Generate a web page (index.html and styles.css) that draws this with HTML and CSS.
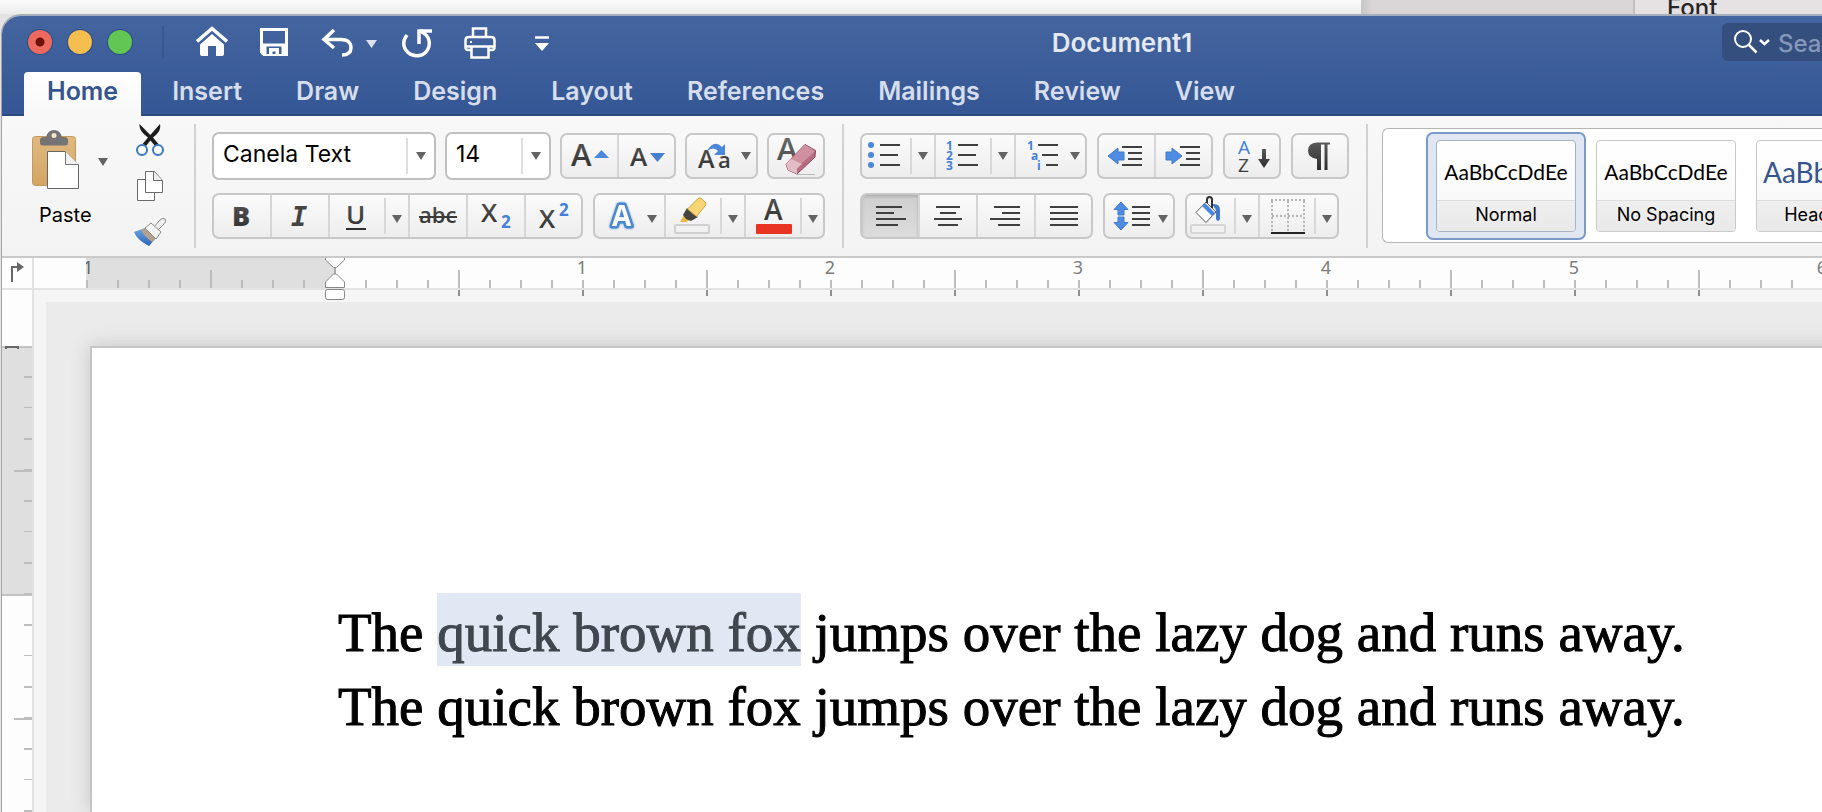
FILE: index.html
```html
<!DOCTYPE html>
<html lang="en">
<head>
<meta charset="utf-8">
<title>Document1</title>
<link rel="stylesheet" href="styles.css">
</head>
<body>
<svg class="defs" aria-hidden="true">
  <defs>
    <linearGradient id="ink" x1="0" y1="0" x2="0" y2="1"><stop offset="0" stop-color="#5a5a5a"/><stop offset="1" stop-color="#2c2c2c"/></linearGradient>
    <linearGradient id="board" x1="0" y1="0" x2="0" y2="1"><stop offset="0" stop-color="#e0b981"/><stop offset="1" stop-color="#d3a563"/></linearGradient>
    <linearGradient id="bristle" x1="0" y1="0" x2="0" y2="1"><stop offset="0" stop-color="#6ea6e6"/><stop offset="1" stop-color="#2a64b4"/></linearGradient>
    <symbol id="caret" viewBox="0 0 10 8"><path d="M0 0H10L5 8Z" fill="#636363"/></symbol>
  </defs>
</svg>

<div class="backdrop">
  <div class="backdrop-main"></div>
  <div class="backdrop-side"></div>
  <div class="backdrop-panel">Font</div>
</div>

<div class="window">
  <header class="chrome">
    <div class="titlebar">
      <div class="lights">
        <button class="light light-close" aria-label="Close"></button>
        <button class="light light-min" aria-label="Minimize"></button>
        <button class="light light-max" aria-label="Zoom"></button>
      </div>
      <div class="quick">
        <button aria-label="Home"><svg width="32" height="32" fill="#fff"><path d="M1 15.500 16 2.500 31 15.500" fill="none" stroke="#fff" stroke-width="3.500"/><path d="M16 8 28 18.500V28a2 2 0 0 1-2 2H20V20H12V30H6a2 2 0 0 1-2-2V18.500Z"/></svg></button>
        <button aria-label="Save"><svg width="40" height="32"><path d="M9.500 3.500H34.500V28.500H12L9.500 26Z" fill="none" stroke="#fff" stroke-width="3"/><path d="M9.500 17.500H34.500V28.500H9.500Z" fill="#fff"/><path d="M14.500 20.500H29.500V28H14.500Z" fill="#3f609b"/><path d="M17 22H27V30H23.500V25.500H20.500V30H17Z" fill="#fff"/></svg></button>
        <button aria-label="Undo"><svg width="62" height="32"><path d="M18 4 8 13.500 18 22M8 13.500H25C33 13.500 35 18 35 21.500C35 26 32 29 26 29" fill="none" stroke="#fff" stroke-width="3.500"/><path d="M50 14H61L55.500 22Z" fill="#dbe2ef"/></svg></button>
        <button aria-label="Redo"><svg width="32" height="32"><path d="M5 9C1 14 0 21 6 26.500C11 31 19 31 24 26C29 20 28 12 23 8L18 4.500" fill="none" stroke="#fff" stroke-width="3.500"/><path d="M17 18V5H30" fill="none" stroke="#fff" stroke-width="3.500"/></svg></button>
        <button aria-label="Print"><svg width="44" height="34" fill="none" stroke="#fff" stroke-width="2.500"><path d="M15 12V3.500H28V12"/><path d="M13 25H10Q7.500 25 7.500 22V15Q7.500 12 11 12H33Q36.500 12 36.500 15V22Q36.500 25 34 25H31"/><path d="M7.500 21.500H36.500M13.500 22V32.500H30.500V22"/><path d="M12 17h2" stroke-width="2"/></svg></button>
        <button aria-label="Customize toolbar"><svg width="32" height="32"><path d="M9 11.500H23" stroke="#fff" stroke-width="2.500"/><path d="M9 17H23L16 25Z" fill="#fff"/></svg></button>
      </div>
      <h1 class="doc-title">Document1</h1>
      <label class="search">
        <svg width="36" height="24" fill="none" stroke="#fff"><circle cx="9" cy="9" r="8" stroke-width="2"/><path d="M15 15 22.500 22.500" stroke-width="2.500"/><path d="M26 10 30.500 14 35 10" stroke-width="2.500"/></svg>
        <input type="text" placeholder="Search in Document" aria-label="Search in Document">
      </label>
    </div>
    <nav class="tabs">
      <a class="tab tab-active" href="#home">Home</a>
      <a class="tab" href="#insert">Insert</a>
      <a class="tab" href="#draw">Draw</a>
      <a class="tab" href="#design">Design</a>
      <a class="tab" href="#layout">Layout</a>
      <a class="tab" href="#references">References</a>
      <a class="tab" href="#mailings">Mailings</a>
      <a class="tab" href="#review">Review</a>
      <a class="tab" href="#view">View</a>
    </nav>
  </header>

  <div class="ribbon">
    <section class="section clipboard">
      <button class="paste">
        <svg width="76" height="60"><rect x=".5" y="6.500" width="43" height="49" rx="3" fill="url(#board)" stroke="#c39a5c"/><path d="M8 10Q8 7 12 7H14Q16 0 22 0T30 7H32Q36 7 36 10V13Q36 15.500 33 15.500H11Q8 15.500 8 13Z" fill="#747474"/><circle cx="22" cy="5.500" r="2.500" fill="#f3e6cf"/><path d="M15.500 21.500H33L46.500 35V58.500H15.500Z" fill="#fff" stroke="#666"/><path d="M33.500 21.500V34.500H46.500" fill="#f1f1f1" stroke="#777"/><path d="M66 28H76L71 36Z" fill="#636363"/></svg>
        <span>Paste</span>
      </button>
      <div class="clip-tools">
        <button aria-label="Cut"><svg width="32" height="32"><path d="M5.500 0C5 5 8 9 14 13.500L8.500 20 12 22 16.500 16.500 21 22 24.500 20 19 13.500C25 9 27 5 26 0L16.300 11Z" fill="#1d1d1d"/><circle cx="8" cy="26" r="5" fill="#fff" stroke="#3c78c8" stroke-width="2"/><circle cx="24" cy="26" r="5" fill="#fff" stroke="#3c78c8" stroke-width="2"/></svg></button>
        <button aria-label="Copy"><svg width="32" height="32" fill="#fff" stroke="#6a6a6a"><path d="M3.500 9.500H20.500V30.500H3.500Z"/><path d="M11.500 1.500H20.500L28.500 10.500V22.500H11.500Z"/><path d="M19.500 1.500V10.500H28.500" fill="#eee"/></svg></button>
        <button aria-label="Format painter"><svg width="32" height="32"><path d="M19 12 26 4Q29 1 31 3T30 8L23 15Z" fill="#eee" stroke="#8a8a8a"/><path d="M0 16 11 12 22 22 15 30Q3 24 0 16Z" fill="url(#bristle)"/><path d="M7 13.500 12 12 22 22 18.500 26Q10 21 7 13.500Z" fill="#b3a08f"/><path d="M11 12 17 7 27 16 22 23Z" fill="#f4f4f4" stroke="#8a8a8a"/></svg></button>
      </div>
    </section>

    <section class="section section-font">
      <div class="row row-font">
        <span class="combo combo-name"><select aria-label="Font"><option>Canela Text</option></select><svg class="combo-arrow" width="10" height="8"><use href="#caret"/></svg></span>
        <span class="combo combo-size"><select aria-label="Font size"><option>14</option></select><svg class="combo-arrow" width="10" height="8"><use href="#caret"/></svg></span>
        <div class="group">
          <button aria-label="Increase font size"><svg width="55" height="42"><text class="glyph" x="9" y="31" font-size="31">A</text><path d="M32 23H47L39.500 15Z" fill="#4b87dc"/></svg></button>
          <button aria-label="Decrease font size"><svg width="55" height="42"><text class="glyph" x="11" y="31" font-size="26">A</text><path d="M31 18H46L38.500 27Z" fill="#4580cf"/></svg></button>
        </div>
        <div class="group">
          <button aria-label="Change case"><svg width="69" height="42"><text class="glyph" x="11" y="33" font-size="25">A</text><text class="glyph" x="31" y="33" font-size="22">a</text><path d="M20 16Q27 4 35 12L38 9V20H27L31 16Q27 11 20 16Z" fill="#4b87dc"/><use href="#caret" x="54" y="17" width="10" height="8"/></svg></button>
        </div>
        <div class="group">
          <button aria-label="Clear formatting"><svg width="54" height="42"><text class="glyph" x="8" y="25" font-size="31" fill-opacity=".85">A</text><path d="M28 39.500H46" stroke="#bbb"/><path d="M17 29 36 9.500 46.500 15.500 46 22 28 39 19 35Z" fill="#b86d80" stroke="#8f4256"/><path d="M17 29 36 9.500 46 16 28 33Z" fill="#cf91a0"/><path d="M17 29 22 24 33 29 28 33.500V39L19 35Z" fill="#e2bdc6"/></svg></button>
        </div>
      </div>
      <div class="row">
        <div class="group">
          <button aria-label="Bold"><svg width="56" height="42"><text class="glyph glyph-bold" x="18" y="31" font-size="27">B</text></svg></button>
          <button aria-label="Italic"><svg width="56" height="42"><text class="glyph-italic" x="19" y="31" font-size="27">I</text></svg></button>
          <button aria-label="Underline"><svg width="54" height="42"><text class="glyph" x="16" y="29" font-size="26">U</text><path d="M16 34H36" stroke="#2f2f2f" stroke-width="2"/></svg></button>
          <button class="split" aria-label="Underline options"><svg width="22" height="42"><use href="#caret" x="6" y="20" width="10" height="8"/></svg></button>
          <button aria-label="Strikethrough"><svg width="56" height="42"><text class="glyph" x="9" y="28" font-size="22">abc</text><path d="M9 22H47" stroke="#3a3a3a" stroke-width="2"/></svg></button>
          <button aria-label="Subscript"><svg width="56" height="42"><text class="glyph" x="13" y="27" font-size="26">X</text><text class="glyph-blue" x="33" y="33" font-size="17">2</text></svg></button>
          <button aria-label="Superscript"><svg width="55" height="42"><text class="glyph" x="13" y="33" font-size="26">X</text><text class="glyph-blue" x="33" y="21" font-size="17">2</text></svg></button>
        </div>
        <div class="group">
          <button aria-label="Text effects"><svg width="69" height="42"><text class="glyph-glow" x="17" y="31" font-size="28">A</text><use href="#caret" x="52" y="20" width="10" height="8"/></svg></button>
          <button aria-label="Highlight color"><svg width="54" height="42"><path d="M14 27 18 20 24 25 20 27Z" fill="#e9b93f"/><path d="M17 20 21 13 32 22 25 26 20 24Z" fill="#444"/><path d="M21.500 14 32 3.500Q34 2 36 4L39 7Q41 9 39 11L30.500 21.500Z" fill="#f8d673" stroke="#cfa545"/><rect x="9" y="30" width="34" height="8" rx="1" fill="#f1f1f1" stroke="#d0d0d0" stroke-width="2"/></svg></button>
          <button class="split" aria-label="Highlight options"><svg width="22" height="42"><use href="#caret" x="6" y="20" width="10" height="8"/></svg></button>
          <button aria-label="Font color"><svg width="54" height="42"><text class="glyph" x="18" y="25" font-size="28">A</text><rect x="10" y="29" width="36" height="10" rx="1" fill="#e93323"/></svg></button>
          <button class="split" aria-label="Font color options"><svg width="21" height="42"><use href="#caret" x="6" y="20" width="10" height="8"/></svg></button>
        </div>
      </div>
    </section>

    <section class="section section-paragraph">
      <div class="row row-top">
        <div class="group">
          <button aria-label="Bullets"><svg width="48" height="42"><g fill="#4b87dc"><circle cx="9" cy="10" r="3"/><circle cx="9" cy="20" r="3"/><circle cx="9" cy="30" r="3"/></g><path class="lines" d="M18 10H38M18 20H36M18 30H38"/></svg></button>
          <button class="split" aria-label="Bullet options"><svg width="22" height="42"><use href="#caret" x="6" y="17" width="10" height="8"/></svg></button>
          <button aria-label="Numbering"><svg width="54" height="42"><g class="glyph-blue" font-size="12"><text x="10" y="15">1</text><text x="10" y="25">2</text><text x="10" y="35">3</text></g><path class="lines" d="M22 10H42M22 20H40M22 30H42"/></svg></button>
          <button class="split" aria-label="Numbering options"><svg width="22" height="42"><use href="#caret" x="6" y="17" width="10" height="8"/></svg></button>
          <button aria-label="Multilevel list"><svg width="69" height="42"><g class="glyph-blue" font-size="12"><text x="11" y="15">1</text><text x="15" y="25">a</text><text x="21" y="35">i</text></g><path class="lines" d="M22 10H42M26 20H42M30 30H42"/><use href="#caret" x="54" y="17" width="10" height="8"/></svg></button>
        </div>
        <div class="group">
          <button aria-label="Decrease indent"><svg width="55" height="42"><path d="M9 21 19 13V17H25V25H19V29Z" class="arrow"/><path class="lines" d="M23 12H43M29 18H43M29 24H43M23 30H43"/></svg></button>
          <button aria-label="Increase indent"><svg width="55" height="42"><path d="M26 21 16 13V17H10V25H16V29Z" class="arrow"/><path class="lines" d="M24 12H44M30 18H44M30 24H44M24 30H44"/></svg></button>
        </div>
        <div class="group">
          <button aria-label="Sort"><svg width="54" height="42"><text class="glyph-blue glyph-regular" x="13" y="19" font-size="19">A</text><text class="glyph glyph-regular" x="13" y="37" font-size="19">Z</text><path d="M37 14H41V24H45L39 33 33 24H37Z" fill="url(#ink)"/></svg></button>
        </div>
        <div class="group">
          <button aria-label="Show formatting marks"><svg width="54" height="42"><path d="M24 24Q15 23 15 15.500T24 7.500H37V9.500H34.500V35H31.500V9.500H28V35H24Z" fill="url(#ink)"/></svg></button>
        </div>
      </div>
      <div class="row">
        <div class="group">
          <button class="pressed" aria-label="Align left" aria-pressed="true"><svg width="56" height="42"><path class="lines" d="M14 12H40M14 18H32M14 24H44M14 30H36"/></svg></button>
          <button aria-label="Center"><svg width="56" height="42"><path class="lines" d="M16 12H40M20 18H36M14 24H42M18 30H38"/></svg></button>
          <button aria-label="Align right"><svg width="56" height="42"><path class="lines" d="M16 12H42M24 18H42M12 24H42M20 30H42"/></svg></button>
          <button aria-label="Justify"><svg width="55" height="42"><path class="lines" d="M14 12H42M14 18H42M14 24H42M14 30H42"/></svg></button>
        </div>
        <div class="group">
          <button aria-label="Line spacing"><svg width="68" height="42"><path d="M16 7 23 14.500H19V20H13V14.500H9ZM16 35 23 27.500H19V22H13V27.500H9Z" class="arrow"/><path class="lines" d="M27 12H45M27 18H45M27 24H45M27 30H45"/><use href="#caret" x="53" y="20" width="10" height="8"/></svg></button>
        </div>
        <div class="group">
          <button aria-label="Shading"><svg width="47" height="42"><path d="M25 9Q33 8 33 15V24Q31 28 29 24V15Z" fill="#3f79cc"/><path d="M19 7 29 17 19 27.500 9 17.500Z" fill="#fff" stroke="#555"/><path d="M15 11 18 8 28 18 25 21Z" fill="#4b87dc"/><path d="M20 8V5Q20 2 22.500 2T25 5V13" fill="none" stroke="#333" stroke-width="2"/><rect x="4" y="30" width="34" height="8" rx="1" fill="#f1f1f1" stroke="#d6d6d6" stroke-width="2"/></svg></button>
          <button class="split" aria-label="Shading options"><svg width="22" height="42"><use href="#caret" x="6" y="20" width="10" height="8"/></svg></button>
          <button aria-label="Borders"><svg width="54" height="42"><path d="M11 5H45M12 6V36M28 6V36M44 6V36M12 21H44" fill="none" stroke="#b4b4b4" stroke-width="2" stroke-dasharray="2 2"/><path d="M11 38H45" stroke="#222" stroke-width="2"/></svg></button>
          <button class="split" aria-label="Border options"><svg width="21" height="42"><use href="#caret" x="6" y="20" width="10" height="8"/></svg></button>
        </div>
      </div>
    </section>

    <section class="styles">
      <button class="style style-selected"><span class="card"><span class="preview">AaBbCcDdEe</span><span class="name">Normal</span></span></button>
      <button class="style"><span class="card"><span class="preview">AaBbCcDdEe</span><span class="name">No Spacing</span></span></button>
      <button class="style"><span class="card"><span class="preview preview-heading">AaBbCcDc</span><span class="name">Heading 1</span></span></button>
    </section>
  </div>

  <div class="editor">
    <button class="tab-kind" aria-label="Tab stop type"><svg width="30" height="30"><path d="M10 24V9H16" fill="none" stroke="#666" stroke-width="2"/><path d="M15 4 22 9 15 14Z" fill="#666"/></svg></button>
    <div class="hruler">
      <div class="hruler-margin">1</div>
      <ol class="hruler-scale"><li>1</li><li>2</li><li>3</li><li>4</li><li>5</li><li>6</li></ol>
      <svg class="indent" width="20" height="43" fill="#fff" stroke="#888"><path d="M10 10V16" stroke="#aaa" stroke-width="2"/><path d="M.5 0V2L8.500 9.500H11.500L19.500 2V0"/><path d="M.5 29.500V24L8.500 16H11.500L19.500 24V29.500Z"/><rect x=".5" y="31.500" width="19" height="10" rx="2"/></svg>
    </div>
    <div class="vruler"><svg class="vmark" width="14" height="4"><path d="M1 3V1H13V3" fill="none" stroke="#666" stroke-width="2"/></svg></div>
    <div class="canvas-frame">
      <main class="canvas">
        <article class="page">
          <p>The <mark>quick brown fox</mark> jumps over the lazy dog and runs away.</p>
          <p>The quick brown fox jumps over the lazy dog and runs away.</p>
        </article>
      </main>
    </div>
  </div>
</div>
</body>
</html>
```
FILE: styles.css
```css
* { box-sizing: border-box; }
body {
  margin: 0;
  height: 100vh;
  overflow: hidden;
  display: grid;
  grid-template: 14px 1fr / 100%;
  background: #e3e3e3;
  font-family: Inter, "Liberation Sans", sans-serif;
}
button { margin: 0; padding: 0; border: 0; background: none; font: inherit; color: inherit; display: block; flex: none; }
svg { display: block; }
.defs { position: absolute; width: 0; height: 0; }

.backdrop { display: flex; background: #f4f4f4; }
.backdrop-main { flex: 1; background: linear-gradient(#fafafa, #ececec); }
.backdrop-side { width: 272px; background: linear-gradient(90deg, #c9c6c7, #dad6d7 12px); }
.backdrop-panel {
  width: 189px;
  padding-left: 32px;
  border-left: 2px solid #c4c0c2;
  background: #e6e1e3;
  color: #262626;
  font-size: 24px;
  font-weight: 500;
  line-height: 16px;
}

.window {
  min-height: 0;
  display: flex;
  flex-direction: column;
  margin-left: 1px;
  border-top: 2px solid #a7aebb;
  border-left: 1px solid #a5a5a5;
  border-top-left-radius: 20px;
  overflow: hidden;
  background: #f4f4f4;
  position: relative;
}
.chrome { background: linear-gradient(#44659f, #345694); box-shadow: inset 0 -2px #2b4a80; flex: none; }
.titlebar { display: flex; align-items: center; height: 52px; }
.lights { display: flex; gap: 16px; padding: 0 30px 0 26px; }
.light { width: 24px; height: 24px; border-radius: 50%; box-shadow: 0 0 0 1px #2f4d84; }
.light-close { background: radial-gradient(circle, #6e1109 4px, #ed6a5f 5px); }
.light-min { background: #f5bf4f; }
.light-max { background: #62c655; }
.quick { display: flex; align-items: center; gap: 24px; padding-left: 32px; border-left: 2px solid #38588f; height: 32px; }
.doc-title {
  flex: 1;
  margin: 0;
  padding: 2px 36px 0 0;
  text-align: center;
  font-size: 26px;
  line-height: 32px;
  font-weight: 600;
  color: #e3e8f2;
}
.search {
  display: flex;
  align-items: center;
  width: 100px;
  height: 38px;
  padding-left: 12px;
  gap: 8px;
  border-radius: 6px 0 0 6px;
  background: #344f7e;
  overflow: hidden;
}
.search svg { flex: none; }
.search input { min-width: 0; flex: 1; height: 38px; padding: 2px 0 0; border: 0; outline: 0; background: none; color: #fff; font: 500 24px Inter, sans-serif; }
.search input::placeholder { color: #8497bb; opacity: 1; }
.tabs { display: flex; align-items: flex-end; gap: 8px; height: 48px; padding-left: 22px; }
.tab {
  height: 44px;
  padding: 1px 23px 0;
  border-radius: 4px 4px 0 0;
  font-size: 25px;
  line-height: 37px;
  font-weight: 600;
  color: #d6deed;
  text-decoration: none;
}
.tab-active { background: linear-gradient(#fff, #f8f8f8); color: #34558f; }

.ribbon {
  display: flex;
  flex: none;
  padding: 8px 0;
  border-bottom: 2px solid #c9c9c9;
  background: linear-gradient(#f8f8f8, #f3f3f3);
}
.section { flex: none; padding: 8px 16px 0; border-right: 2px solid #d2d2d2; }
.section-font { padding-right: 17px; }
.section-paragraph { padding-right: 17px; }
.clipboard { display: flex; gap: 26px; padding: 0 28px 0 30px; }
.paste { align-self: flex-start; padding-top: 6px; text-align: left; }
.paste span { display: block; padding: 13px 0 0 7px; font-size: 20px; line-height: 24px; color: #000; }
.clip-tools { display: flex; flex-direction: column; gap: 14px; }
.row { display: flex; gap: 10px; align-items: center; }
.row-font, .row-top { height: 48px; margin-bottom: 13px; }
.row-font { gap: 9px; }
.group {
  display: flex;
  flex: none;
  border: 2px solid #c8c8c8;
  border-radius: 7px;
  background: linear-gradient(#fbfbfb, #ededed);
  overflow: hidden;
}
.group button + button { border-left: 2px solid #d6d6d6; }
.group button.split { border-left: 2px solid; border-image: linear-gradient(transparent 4px, #d8d8d8 4px 38px, transparent 38px) 1; }
.group .pressed { background: linear-gradient(#cfcfcf, #dcdcdc); box-shadow: inset 0 2px 3px #b0b0b0; }
.combo {
  display: block;
  flex: none;
  height: 48px;
  border: 2px solid #c0c0c0;
  border-radius: 7px;
  background: #fff;
  position: relative;
}
.combo-name { width: 224px; }
.combo-size { width: 106px; }
.combo select {
  width: 100%;
  height: 100%;
  padding: 0 32px 4px 9px;
  border: 0;
  appearance: none;
  background: linear-gradient(#dedede, #dedede) right 26px top 4px / 2px 36px no-repeat;
  font: 23px/32px Inter, sans-serif;
  color: #000;
}
.combo-arrow { position: absolute; right: 8px; top: 18px; pointer-events: none; }
.glyph { font-family: "Open Sans", sans-serif; font-weight: 600; fill: url(#ink); }
.glyph-bold { font-weight: 800; }
.glyph-italic { font-family: "DejaVu Sans Mono", monospace; font-weight: 700; font-style: italic; fill: #444; }
.glyph-blue { font-family: "Open Sans", sans-serif; font-weight: 700; fill: #4480d8; }
.glyph-regular { font-weight: 500; }
.glyph-glow { font-family: "Open Sans", sans-serif; font-weight: 700; fill: #fff; stroke: #4b87d0; stroke-width: 5px; stroke-linejoin: round; paint-order: stroke; filter: drop-shadow(0 0 1px #6aa0e0); }
.lines { fill: none; stroke: #3f3f3f; stroke-width: 2px; }
.arrow { fill: #4f8be0; stroke: #3f7bd0; stroke-width: 1px; }

.styles {
  display: flex;
  flex: 1;
  min-width: 0;
  margin: 4px 0 5px 14px;
  padding: 3px 0 2px 43px;
  border: 1px solid #b5b5b5;
  border-right: 0;
  border-radius: 6px 0 0 6px;
  background: #fff;
  overflow: hidden;
}
.style { width: 160px; padding: 6px 8px; border: 2px solid transparent; border-radius: 7px; }
.style-selected { border-color: #7b9aca; background: #e0e7f3; }
.card { display: flex; flex-direction: column; height: 92px; border: 1px solid #c9c9c9; border-radius: 4px; overflow: hidden; background: linear-gradient(#fff, #f6f6f6); }
.style-selected .card { border-color: #a9b3c4; }
.preview { flex: 1; overflow: hidden; white-space: nowrap; font-family: Lato, sans-serif; font-size: 21px; line-height: 62px; text-align: center; color: #000; }
.preview-heading { padding-left: 6px; text-align: left; font-size: 28px; color: #34558f; }
.name { height: 31px; border-top: 1px solid #dedede; background: linear-gradient(#efefef, #e9e9e9); font-size: 18px; line-height: 28px; text-align: center; color: #000; }

.editor { flex: 1; min-height: 0; display: grid; grid-template: 32px 1fr / 32px minmax(0, 1fr); background: #fdfdfd; }
.tab-kind { border-right: 2px solid #e2e2e2; border-bottom: 2px solid #e2e2e2; }
.hruler { display: flex; padding-left: 52px; border-bottom: 2px solid #e2e2e2; position: relative; font: 18px/18px "Noto Sans", sans-serif; color: #7c7c7c; }
.hruler-margin, .hruler-scale {
  background:
    repeating-linear-gradient(90deg, #bdbdbd 0 2px, transparent 2px 31px) 0 100% / 100% 8px no-repeat,
    repeating-linear-gradient(90deg, transparent 0 124px, #bdbdbd 124px 126px, transparent 126px 248px) 0 100% / 100% 18px no-repeat;
}
.hruler-margin { flex: none; width: 248px; overflow: hidden; text-indent: -3px; background-color: #dfdfdf; color: #666; }
.hruler-scale { display: flex; flex: 1; min-width: 0; margin: 0; padding: 0 0 0 124px; list-style: none; overflow: hidden; }
.hruler-scale li { flex: none; width: 248px; text-align: center; }
.indent { position: absolute; left: 291px; top: 0; z-index: 1; }
.vruler {
  border-right: 2px solid #e2e2e2;
  position: relative;
  background:
    repeating-linear-gradient(transparent 0 30px, #bdbdbd 30px 32px, transparent 32px 61px, #bdbdbd 61px 62px) 100% 56px / 8px 100% no-repeat,
    repeating-linear-gradient(transparent 0 124px, #bdbdbd 124px 126px, transparent 126px 248px) 100% 56px / 18px 100% no-repeat,
    linear-gradient(transparent 56px, #c2c2c2 56px 58px, #dfdfdf 58px 304px, #c2c2c2 304px 306px, transparent 306px);
}
.vmark { position: absolute; left: 3px; top: 56px; }
.canvas-frame {
  min-height: 0;
  padding: 12px 0 0 12px;
  background:
    repeating-linear-gradient(90deg, #8f8f8f 0 2px, transparent 2px 124px) 424px 0 / 100% 6px no-repeat,
    #f5f5f5;
}
.canvas { height: 100%; padding: 44px 0 0 44px; background: #ebebeb; overflow: hidden; }
.page {
  height: 100%;
  margin-right: -40px;
  padding: 248px 0 0 246px;
  border: solid #c5c5c5;
  border-width: 2px 0 0 2px;
  background: #fff;
  box-shadow: 0 0 18px #c4c4c4;
}
.page p { margin: 0; font: 55px/74px "Liberation Serif", serif; color: #000; white-space: nowrap; -webkit-text-stroke: 1px; }
.page mark { padding: 9px 0 3px; background: #e2e7f4; color: #41464f; }
```
